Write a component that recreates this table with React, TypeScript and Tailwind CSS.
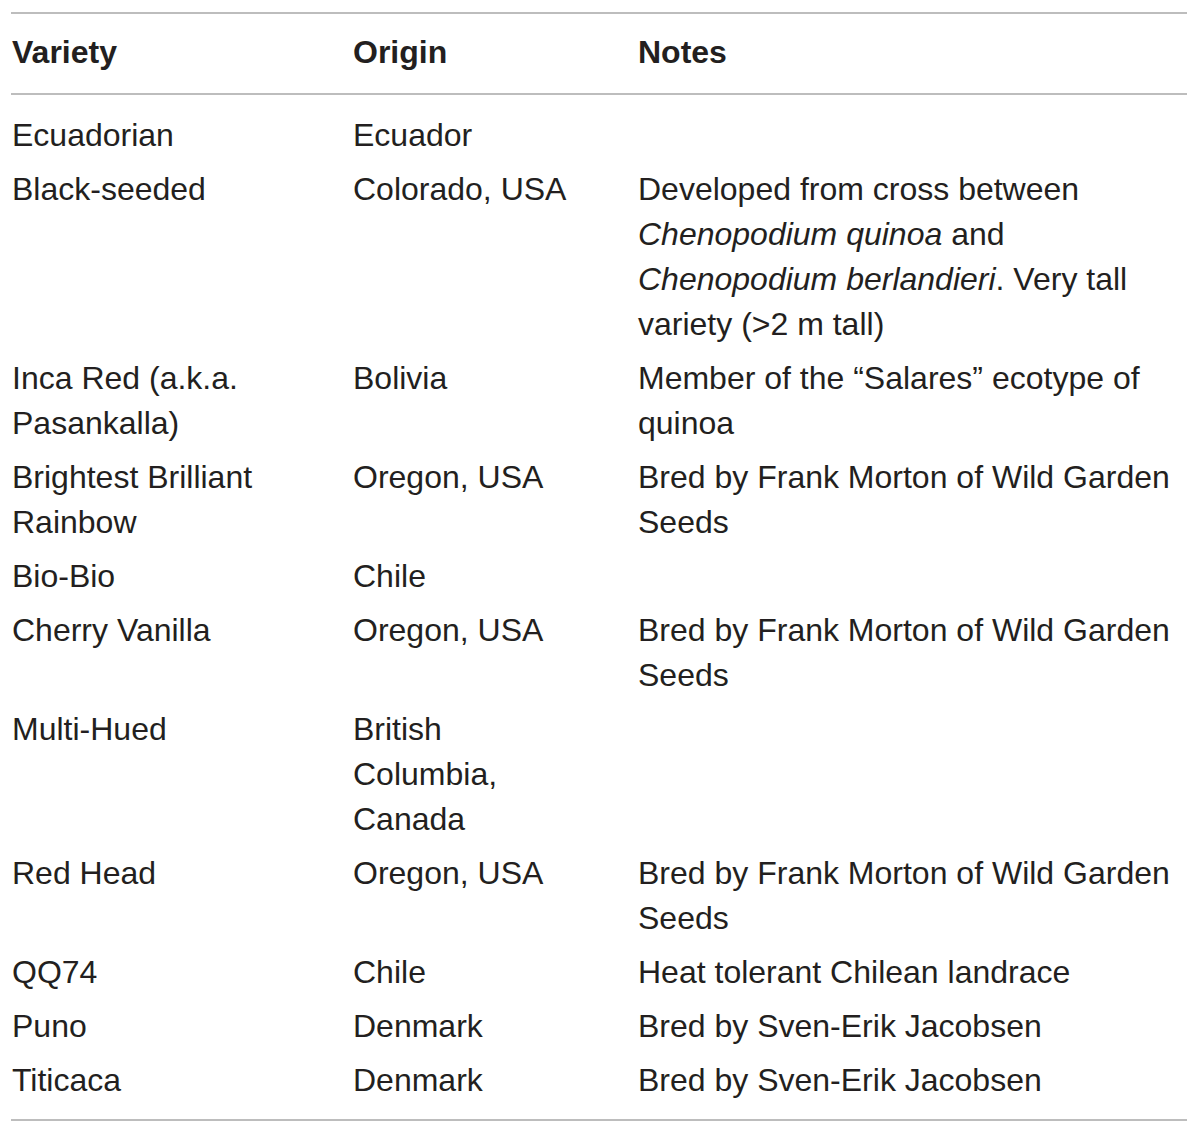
import React from 'react';

type Row = { variety: string; origin: string; notes: React.ReactNode };

const rows: Row[] = [
  { variety: 'Ecuadorian', origin: 'Ecuador', notes: '' },
  {
    variety: 'Black-seeded',
    origin: 'Colorado, USA',
    notes: (
      <>
        Developed from cross between <i>Chenopodium quinoa</i> and <i>Chenopodium berlandieri</i>. Very tall variety
        (&gt;2 m tall)
      </>
    ),
  },
  { variety: 'Inca Red (a.k.a. Pasankalla)', origin: 'Bolivia', notes: 'Member of the \u201cSalares\u201d ecotype of quinoa' },
  { variety: 'Brightest Brilliant Rainbow', origin: 'Oregon, USA', notes: 'Bred by Frank Morton of Wild Garden Seeds' },
  { variety: 'Bio-Bio', origin: 'Chile', notes: '' },
  { variety: 'Cherry Vanilla', origin: 'Oregon, USA', notes: 'Bred by Frank Morton of Wild Garden Seeds' },
  { variety: 'Multi-Hued', origin: 'British Columbia, Canada', notes: '' },
  { variety: 'Red Head', origin: 'Oregon, USA', notes: 'Bred by Frank Morton of Wild Garden Seeds' },
  { variety: 'QQ74', origin: 'Chile', notes: 'Heat tolerant Chilean landrace' },
  { variety: 'Puno', origin: 'Denmark', notes: 'Bred by Sven-Erik Jacobsen' },
  { variety: 'Titicaca', origin: 'Denmark', notes: 'Bred by Sven-Erik Jacobsen' },
];

export default function App() {
  return (
    <div className="w-[1200px] h-[1136px] bg-white pt-3 text-[#231f20] font-['Liberation_Sans',Arial,sans-serif] text-[32px] leading-[45px]">
      <table className="ml-[11px] w-[1176px] table-fixed border-collapse border-y-2 border-[#bdbdbd]">
        <colgroup>
          <col className="w-[342px]" />
          <col className="w-[285px]" />
          <col className="w-[549px]" />
        </colgroup>
        <thead>
          <tr className="border-b-2 border-[#bdbdbd] text-left">
            <th className="pl-[1px] pt-[16px] pb-[18px] font-bold">Variety</th>
            <th className="pt-[16px] pb-[18px] font-bold">Origin</th>
            <th className="pt-[16px] pb-[18px] font-bold">Notes</th>
          </tr>
        </thead>
        <tbody>
          {rows.map((r, i) => {
            const first = i === 0;
            const last = i === rows.length - 1;
            const pad = first ? 'pt-[17.5px] pb-[4.5px]' : last ? 'pt-[4.5px] pb-[16.5px]' : 'py-[4.5px]';
            return (
              <tr key={r.variety} className="align-top">
                <td className={`pl-[1px] pr-6 ${pad}`}>{r.variety}</td>
                <td className={`pr-[55px] ${pad}`}>{r.origin}</td>
                <td className={pad}>{r.notes}</td>
              </tr>
            );
          })}
        </tbody>
      </table>
    </div>
  );
}
